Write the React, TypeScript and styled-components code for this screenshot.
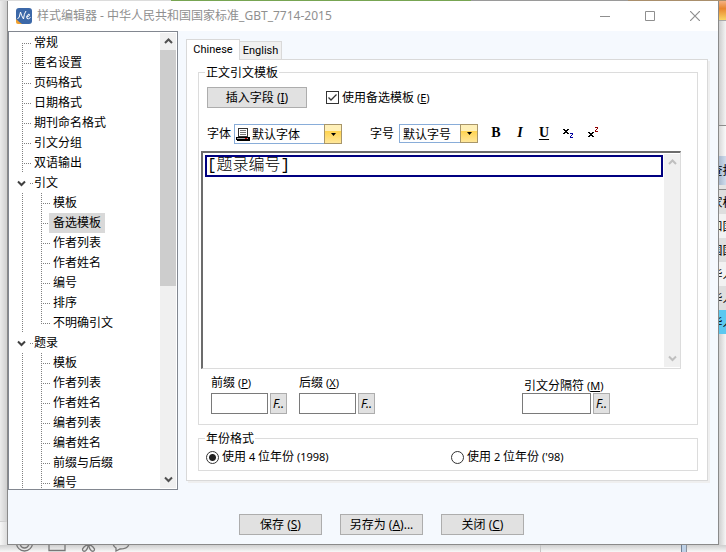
import React from "react";
import styled, { createGlobalStyle, css } from "styled-components";

const UI = `"Noto Sans", "Noto Sans CJK SC", sans-serif`;

const Global = createGlobalStyle`
  *, *::before, *::after { box-sizing: border-box; }
  html, body, #root { height: 100%; margin: 0; }
  body { overflow: hidden; font: 12px/16px ${UI}; color: #000; }
  button, input, textarea, select { font: inherit; color: inherit; margin: 0; }
`;

/* ---------- desktop behind the dialog ---------- */

const Desktop = styled.div`
  display: grid;
  grid-template: 1px minmax(0, 1fr) 7px / 7px minmax(0, 1fr) 7px;
  height: 100%;
  background: #fafafa;
`;
const TopEdge = styled.div`
  grid-column: 1 / -1;
  background: linear-gradient(90deg, #dcdcdc 0 171px, #77a552 171px 471px, #9a9a9a 471px 628px, #a98f6c 628px);
`;
const LeftEdge = styled.div`
  display: flex;
  flex-direction: column;
  justify-content: flex-end;
  background: linear-gradient(90deg, #ebebeb, #cfcfcf);
`;
const LeftFoot = styled.div`
  height: 24px;
  border-top: 1px solid #d0d0d0;
  background: linear-gradient(90deg, #f7f7f7, #dcdcdc);
`;
const RightEdge = styled.div`
  display: flex;
  flex-direction: column;
  overflow: hidden;
  background: #f0f0f0;
`;
const Ribbon = styled.div`
  flex: none;
  height: 20px;
  border-bottom: 1px solid #a8a8a8;
  background: linear-gradient(#f5b183, #e8862e 40%, #fbd565);
`;
const Band = styled.div`
  flex: none;
  height: 105px;
  border-bottom: 1px solid #8c8c8c;
  background: linear-gradient(90deg, #cdcdcd, #f4f4f4);
`;
const PaleBand = styled.div`
  flex: none;
  height: 30px;
  background: linear-gradient(90deg, #d8d8d8, #fafafa);
`;
const FindBand = styled.div`
  display: flex;
  justify-content: center;
  align-items: center;
  flex: none;
  height: 29px;
  white-space: nowrap;
  background: linear-gradient(90deg, #a9b9ce, #cfdcec);
`;
const HeaderLine = styled.div`
  flex: none;
  height: 5px;
  border-bottom: 1px solid #8c8c8c;
  background: #e4e4e4;
`;
const ListRow = styled.div<{ $tone: "odd" | "even" | "active" }>`
  display: flex;
  justify-content: center;
  align-items: center;
  flex: none;
  height: 24px;
  padding-top: 2px;
  white-space: nowrap;
  background: ${(p) => ({ odd: "#dedede", even: "#f2f2f2", active: "#5bc8f0" })[p.$tone]};
`;
const ListRest = styled.div`
  flex: 1;
  background: linear-gradient(90deg, #cfcfcf, #f6f6f6);
`;
const BottomEdge = styled.div`
  grid-column: 1 / -1;
  display: flex;
  justify-content: space-between;
  overflow: hidden;
  background: linear-gradient(#cfcfcf, #f8f8f8);
`;
const ChatIcons = styled.div`
  display: flex;
  gap: 15px;
  padding-left: 16px;
  color: #777;
`;
const PaneEdges = styled.div`
  width: 186px;
  border-left: 1px solid #c4c4c4;
  background: linear-gradient(90deg, transparent 140px, #6f7f95 140px 141px, #bdd0e6 141px 145px, #8a93a0 145px 146px, transparent 146px);
`;

/* ---------- dialog ---------- */

const Dialog = styled.div`
  display: flex;
  flex-direction: column;
  min-height: 0;
  border: solid #8a8a8a;
  border-width: 0 1px 1px;
  background: #f5f9fe;
`;
const TitleBar = styled.header`
  display: flex;
  align-items: center;
  flex: none;
  height: 30px;
  padding: 0 1px 0 8px;
  background: #fff;
  color: #8f8f8f;
`;
const Title = styled.h1`
  flex: 1;
  margin: 0 0 0 5px;
  font-size: 12px;
  font-weight: 400;
`;
const CaptionButton = styled.button`
  display: grid;
  place-items: center;
  width: 45px;
  height: 30px;
  padding: 0;
  border: 0;
  background: none;
`;
const Main = styled.main`
  display: grid;
  grid-template-columns: 170px minmax(0, 1fr);
  gap: 8px;
  flex: 1;
  min-height: 0;
`;
const Actions = styled.footer`
  display: flex;
  justify-content: center;
  flex: none;
  gap: 18px;
  padding: 24px 0 9px 37px;
`;
const Button = styled.button<{ $width: number }>`
  width: ${(p) => p.$width}px;
  height: 21px;
  padding: 0;
  border: 1px solid #adadad;
  background: #e1e1e1;
  line-height: 19px;
  white-space: nowrap;
`;
const Latin = styled.span`
  font-size: 11px;
`;

/* ---------- tree ---------- */

const TreePane = styled.nav`
  display: flex;
  min-height: 0;
  overflow: hidden;
  border: 1px solid #828790;
  padding-right: 1px;
  background: #fff;
`;
const dottedV = "repeating-linear-gradient(#808080 0 1px, transparent 1px 2px)";
const dottedH = "repeating-linear-gradient(90deg, #808080 0 1px, transparent 1px 2px)";

const TreeList = styled.ul`
  flex: 1;
  margin: 0;
  padding: 1px 0 0;
  list-style: none;
`;
const TreeRow = styled.li<{ $level: 0 | 1; $parent?: boolean; $first?: boolean; $last?: boolean; $deep?: boolean }>`
  display: flex;
  align-items: center;
  height: 20px;
  padding-left: ${(p) => (p.$level ? 40 : 21)}px;
  background-repeat: no-repeat;
  ${(p) =>
    p.$level === 0
      ? p.$parent
        ? css`
            background-image: ${dottedH};
            background-size: 3px 1px;
            background-position: 21px 10px;
          `
        : css`
            background-image: ${dottedV}, ${dottedH};
            background-size: 1px ${p.$first ? 10 : 20}px, 9px 1px;
            background-position: 13px ${p.$first ? 10 : 0}px, 13px 10px;
          `
      : css`
          background-image: ${dottedV}, ${dottedV}, ${dottedH};
          background-size: 1px 20px, 1px ${p.$last ? 10 : 20}px, 9px 1px;
          background-position: 13px 0, 32px 0, 32px 10px;
        `}
`;
const Twisty = styled.button`
  display: grid;
  place-items: center;
  width: 11px;
  height: 11px;
  margin-left: -14px;
  margin-right: 3px;
  padding: 0;
  border: 0;
  background: #fff;
  color: #404040;
`;
const NodeLabel = styled.a<{ $selected?: boolean }>`
  padding: 0 4px;
  line-height: 20px;
  color: #000;
  text-decoration: none;
  background: ${(p) => (p.$selected ? "#d9d9d9" : "transparent")};
`;
const ScrollBar = styled.div<{ $dim?: boolean }>`
  display: flex;
  flex-direction: column;
  flex: none;
  width: 16px;
  margin: 1px 0;
  background: #f0f0f0;
  color: ${(p) => (p.$dim ? "#bfbfbf" : "#505050")};
`;
const ScrollArrow = styled.button`
  display: grid;
  place-items: center;
  width: 100%;
  height: 17px;
  padding: 0;
  border: 0;
  background: none;
`;
const ScrollTrack = styled.div`
  flex: 1;
`;
const ScrollThumb = styled.div`
  height: 56%;
  background: #cdcdcd;
`;

/* ---------- tab pane ---------- */

const TabArea = styled.section`
  display: flex;
  flex-direction: column;
  min-height: 0;
  padding: 8px 10px 9px 0;
`;
const TabStrip = styled.div`
  display: flex;
  align-items: flex-end;
  flex: none;
  height: 20px;
`;
const Tab = styled.button<{ $active?: boolean }>`
  flex: none;
  padding: 0;
  font: 11px/16px Roboto, "Noto Sans CJK SC", sans-serif;
  border: 1px solid #d9d9d9;
  border-bottom: 0;
  ${(p) =>
    p.$active
      ? css`
          width: 54px;
          height: 21px;
          background: #fff;
          margin-bottom: -1px;
          z-index: 1;
        `
      : css`
          width: 42px;
          height: 18px;
          border-left: 0;
          background: #f0f0f0;
        `}
`;
const Panel = styled.div`
  display: flex;
  flex-direction: column;
  flex: 1;
  gap: 4px;
  min-height: 0;
  padding: 3px 9px 9px 11px;
  border: 1px solid #d9d9d9;
  background: #fff;
  box-shadow: 2px 2px 0 #efefef;
`;
const Group = styled.fieldset<{ $grow?: boolean }>`
  display: flex;
  flex-direction: column;
  flex: ${(p) => (p.$grow ? "1 1 0" : "none")};
  min-width: 0;
  min-height: 0;
  margin: 0;
  padding: 0;
  border: 1px solid #dcdcdc;
`;
const Legend = styled.legend`
  margin-left: 6px;
  padding: 2px 1px 0;
`;
const InsertRow = styled.div`
  display: flex;
  align-items: center;
  flex: none;
  gap: 19px;
  padding: 6px 8px 0;
`;
const CheckLabel = styled.label`
  display: flex;
  align-items: center;
  gap: 3px;
`;
const CheckBox = styled.input`
  appearance: none;
  width: 13px;
  height: 13px;
  border: 1px solid #333;
  background: #fff;
  &:checked {
    background: #fff
      url("data:image/svg+xml,%3Csvg xmlns='http://www.w3.org/2000/svg' width='11' height='11'%3E%3Cpath d='M1.5 5.5 4 8 9.5 2.5' fill='none' stroke='%23333' stroke-width='1.3'/%3E%3C/svg%3E");
  }
`;
const FormatRow = styled.div`
  display: flex;
  align-items: flex-start;
  flex: none;
  height: 20px;
  margin-top: 16px;
  padding-left: 8px;
`;
const ComboLabel = styled.label`
  width: 27px;
  line-height: 19px;
`;
const Combo = styled.div<{ $width: number; $height: number }>`
  display: flex;
  align-items: center;
  width: ${(p) => p.$width}px;
  height: ${(p) => p.$height}px;
  padding-left: 1px;
  border: 1px solid #89add9;
  background: #fff;
  & + ${ComboLabel} {
    margin-left: 28px;
    width: 29px;
  }
`;
const ComboSelect = styled.select`
  appearance: none;
  flex: 1;
  align-self: stretch;
  min-width: 0;
  padding: 2px 0 0 2px;
  border: 0;
  background: none;
`;
const ComboArrow = styled.span`
  display: grid;
  place-items: center;
  align-self: stretch;
  width: 18px;
  margin: -1px;
  border: 1px solid #a8966a;
  background: linear-gradient(#fff0b8 0 35%, #ffd34f 35%, #ffe79a);
`;
const StyleButtons = styled.div`
  display: flex;
  margin-left: 6px;
`;
const StyleButton = styled.button<{ $kind: "bold" | "italic" | "underline" | "script" }>`
  width: ${(p) => (p.$kind === "script" ? 25 : 24)}px;
  height: 18px;
  padding: 0;
  border: 0;
  background: none;
  font: bold 14px/18px "Liberation Serif", serif;
  font-style: ${(p) => (p.$kind === "italic" ? "italic" : "normal")};
  text-decoration: ${(p) => (p.$kind === "underline" ? "underline" : "none")};
  text-underline-offset: 2px;
  svg { display: block; margin: 0 auto; }
`;
const Editor = styled.div`
  display: flex;
  flex: 1;
  min-height: 0;
  margin: 7px 16px 0 2px;
  border: solid;
  border-width: 2px 1px 1px 2px;
  border-color: #6c6c6c #dcdcdc #dcdcdc #6c6c6c;
`;
const EditorBody = styled.div`
  flex: 1;
  min-width: 0;
  padding: 2px 1px 2px 2px;
`;
const Template = styled.textarea`
  display: block;
  width: 100%;
  height: 22px;
  padding: 0;
  border: 2px solid #000080;
  outline: 0;
  resize: none;
  overflow: hidden;
  font: 16px/18px "Liberation Mono", "Noto Sans CJK SC", monospace;
  font-weight: 300;
`;
const AffixRow = styled.div`
  display: flex;
  align-items: flex-end;
  flex: none;
  gap: 12px;
  padding: 6px 87px 10px 12px;
`;
const Affix = styled.div<{ $end?: boolean }>`
  display: flex;
  flex-direction: column;
  gap: ${(p) => (p.$end ? 0 : 2)}px;
  margin-left: ${(p) => (p.$end ? "auto" : "0")};
`;
const AffixLabel = styled.label<{ $inset?: boolean }>`
  padding-left: ${(p) => (p.$inset ? 2 : 0)}px;
  line-height: ${(p) => (p.$inset ? 14 : 16)}px;
`;
const AffixControls = styled.div`
  display: flex;
  gap: 2px;
`;
const TextBox = styled.input<{ $width: number }>`
  width: ${(p) => p.$width}px;
  height: 21px;
  padding: 0 3px;
  border: 1px solid #7a7a7a;
  background: #fff;
`;
const FieldButton = styled(Button)`
  font-style: italic;
`;
const YearRow = styled.div`
  display: grid;
  grid-template-columns: 245px minmax(0, 1fr);
  padding: 2px 7px 5px;
`;
const RadioLabel = styled.label`
  display: flex;
  align-items: center;
  gap: 3px;
`;
const Radio = styled.input`
  appearance: none;
  width: 13px;
  height: 13px;
  border: 1px solid #333;
  border-radius: 50%;
  background: #fff;
  &:checked { background: radial-gradient(circle, #222 0 3px, #fff 4px); }
`;

/* ---------- drawings ---------- */

const Chevron = ({ up }: { up?: boolean }) => (
  <svg width="9" height="7" viewBox="0 0 9 7" fill="none" stroke="currentColor" strokeWidth="2">
    <path d={up ? "M1 5 4.5 1.5 8 5" : "M1 1.5 4.5 5 8 1.5"} />
  </svg>
);
const AppIcon = () => (
  <svg width="16" height="16" viewBox="0 0 16 16">
    <path d="M0 9v5q0 2 2 2h5z" fill="#f0a030" />
    <path d="M3 0h10q3 0 3 3v10q0 3-3 3H6Q3 14 0 11V3q0-3 3-3z" fill="#3c68a8" />
    <path d="M1.500 11Q3.500 10.500 4.500 4q1 4 3 7 .5-5.500 2.500-8M10.500 9q3-.5 3-2t-1.500-.500q-2 1.500-1 4 1.500 1 3.500-1" fill="none" stroke="#fff" strokeWidth="1" />
  </svg>
);
const FontIcon = () => (
  <svg width="14" height="13" viewBox="0 0 14 13" shapeRendering="crispEdges">
    <path d="M2.500.5h9v8h-9z" fill="#fff" stroke="#333" />
    <path d="M4 2.500h6M4 4.500h6M4 6.500h6" stroke="#777" />
    <path d="M.5 9.500h12v2H.5z" fill="#aaa" stroke="#000" />
    <path d="M1 12.500h13M13.500 9v4" stroke="#000" />
    <path d="M9 10.500h2" stroke="#c00" />
  </svg>
);
const Script = ({ sup }: { sup?: boolean }) => (
  <svg width="12" height="13" viewBox="0 0 12 13" shapeRendering="crispEdges" fill="none">
    <g transform={sup ? "translate(0 5)" : "translate(0 2)"}>
      <path d="M0 .5h2M4 .5h2M1 1.500h4M2 2.500h2M1 3.500h4M0 4.500h2M4 4.500h2" stroke="#000" />
    </g>
    <g transform={sup ? "translate(7 0)" : "translate(7 6)"}>
      <path d="M0 .5h3M2 1.500h1M1 2.500h1M0 3.500h1M0 4.500h3" stroke={sup ? "#900000" : "#0000a0"} />
    </g>
  </svg>
);
const DownMark = () => (
  <svg width="5" height="3" viewBox="0 0 5 3">
    <path d="M0 0h5L2.500 3z" fill="#000" />
  </svg>
);

/* ---------- data ---------- */

type Node = { label: string; children?: string[]; open?: boolean };
const nodes: Node[] = [
  ...["常规", "匿名设置", "页码格式", "日期格式", "期刊命名格式", "引文分组", "双语输出"].map((label) => ({ label })),
  { label: "引文", children: ["模板", "备选模板", "作者列表", "作者姓名", "编号", "排序", "不明确引文"] },
  { label: "题录", children: ["模板", "作者列表", "作者姓名", "编者列表", "编者姓名", "前缀与后缀", "编号"], open: true },
];
const listRows = ["家标", "和国", "国国", "华人", "华人", "华人"];

const Key = ({ k, tail = "" }: { k: string; tail?: string }) => (
  <span>
    {" ("}
    <u>{k}</u>
    {")" + tail}
  </span>
);

function Tree() {
  return (
    <TreePane aria-label="样式">
      <TreeList>
        {nodes.map((node, i) => (
          <React.Fragment key={node.label}>
            <TreeRow $level={0} $parent={!!node.children} $first={i === 0}>
              {node.children && (
                <Twisty aria-label={node.label}>
                  <Chevron />
                </Twisty>
              )}
              <NodeLabel href="#">{node.label}</NodeLabel>
            </TreeRow>
            {node.children?.map((child, j) => (
              <TreeRow key={child} $level={1} $last={!node.open && j === node.children!.length - 1}>
                <NodeLabel href="#" $selected={child === "备选模板"}>
                  {child}
                </NodeLabel>
              </TreeRow>
            ))}
          </React.Fragment>
        ))}
      </TreeList>
      <ScrollBar>
        <ScrollArrow aria-label="向上"><Chevron up /></ScrollArrow>
        <ScrollTrack><ScrollThumb /></ScrollTrack>
        <ScrollArrow aria-label="向下"><Chevron /></ScrollArrow>
      </ScrollBar>
    </TreePane>
  );
}

function AffixField({ id, label, k, width, end }: { id: string; label: string; k: string; width: number; end?: boolean }) {
  return (
    <Affix $end={end}>
      <AffixLabel htmlFor={id} $inset={end}>
        {label}
        <Latin><Key k={k} /></Latin>
      </AffixLabel>
      <AffixControls>
        <TextBox id={id} $width={width} />
        <FieldButton $width={17}>F..</FieldButton>
      </AffixControls>
    </Affix>
  );
}

export default function App() {
  return (
    <>
      <Global />
      <Desktop>
        <TopEdge />
        <LeftEdge>
          <LeftFoot />
        </LeftEdge>
        <Dialog role="dialog" aria-labelledby="title">
          <TitleBar>
            <AppIcon />
            <Title id="title">样式编辑器 - 中华人民共和国国家标准_GBT_7714-2015</Title>
            <CaptionButton aria-label="最小化">
              <svg width="10" height="10"><path d="M0 5.500h10" stroke="#8f8f8f" /></svg>
            </CaptionButton>
            <CaptionButton aria-label="最大化">
              <svg width="10" height="10"><path d="M.5.5h9v9h-9z" fill="none" stroke="#8f8f8f" /></svg>
            </CaptionButton>
            <CaptionButton aria-label="关闭窗口">
              <svg width="10" height="10"><path d="M0 0 10 10M10 0 0 10" stroke="#8f8f8f" strokeWidth="1.200" /></svg>
            </CaptionButton>
          </TitleBar>
          <Main>
            <Tree />
            <TabArea>
              <TabStrip role="tablist">
                <Tab role="tab" aria-selected $active>Chinese</Tab>
                <Tab role="tab">English</Tab>
              </TabStrip>
              <Panel>
                <Group $grow>
                  <Legend>正文引文模板</Legend>
                  <InsertRow>
                    <Button $width={100}>插入字段<Key k="I" /></Button>
                    <CheckLabel>
                      <CheckBox type="checkbox" defaultChecked />
                      <span>使用备选模板<Latin><Key k="E" /></Latin></span>
                    </CheckLabel>
                  </InsertRow>
                  <FormatRow>
                    <ComboLabel htmlFor="font">字体</ComboLabel>
                    <Combo $width={108} $height={20}>
                      <FontIcon />
                      <ComboSelect id="font"><option>默认字体</option></ComboSelect>
                      <ComboArrow><DownMark /></ComboArrow>
                    </Combo>
                    <ComboLabel htmlFor="size">字号</ComboLabel>
                    <Combo $width={79} $height={19}>
                      <ComboSelect id="size"><option>默认字号</option></ComboSelect>
                      <ComboArrow><DownMark /></ComboArrow>
                    </Combo>
                    <StyleButtons>
                      <StyleButton $kind="bold">B</StyleButton>
                      <StyleButton $kind="italic">I</StyleButton>
                      <StyleButton $kind="underline">U</StyleButton>
                      <StyleButton $kind="script" aria-label="下标"><Script /></StyleButton>
                      <StyleButton $kind="script" aria-label="上标"><Script sup /></StyleButton>
                    </StyleButtons>
                  </FormatRow>
                  <Editor>
                    <EditorBody>
                      <Template aria-label="正文引文模板" spellCheck={false} defaultValue="[题录编号]" />
                    </EditorBody>
                    <ScrollBar $dim>
                      <ScrollArrow aria-label="向上"><Chevron up /></ScrollArrow>
                      <ScrollTrack />
                      <ScrollArrow aria-label="向下"><Chevron /></ScrollArrow>
                    </ScrollBar>
                  </Editor>
                  <AffixRow>
                    <AffixField id="prefix" label="前缀" k="P" width={57} />
                    <AffixField id="suffix" label="后缀" k="X" width={57} />
                    <AffixField id="separator" label="引文分隔符" k="M" width={69} end />
                  </AffixRow>
                </Group>
                <Group>
                  <Legend>年份格式</Legend>
                  <YearRow>
                    <RadioLabel>
                      <Radio type="radio" name="year" defaultChecked />
                      <span>使用<Latin> 4 </Latin>位年份<Latin> (1998)</Latin></span>
                    </RadioLabel>
                    <RadioLabel>
                      <Radio type="radio" name="year" />
                      <span>使用<Latin> 2 </Latin>位年份<Latin> ('98)</Latin></span>
                    </RadioLabel>
                  </YearRow>
                </Group>
              </Panel>
            </TabArea>
          </Main>
          <Actions>
            <Button $width={83}>保存<Key k="S" /></Button>
            <Button $width={83}>另存为<Key k="A" tail="..." /></Button>
            <Button $width={83}>关闭<Key k="C" /></Button>
          </Actions>
        </Dialog>
        <RightEdge>
          <Ribbon />
          <Band />
          <PaleBand />
          <FindBand>查找</FindBand>
          <HeaderLine />
          {listRows.map((text, i) => (
            <ListRow key={i} $tone={i === 5 ? "active" : i % 2 ? "even" : "odd"}>{text}</ListRow>
          ))}
          <ListRest />
        </RightEdge>
        <BottomEdge>
          <ChatIcons>
            <svg width="17" height="7" fill="none" stroke="currentColor" strokeWidth="1.300">
              <circle cx="8.500" cy="-2" r="8" />
              <path d="M4-1q1 4 4.500 4T13-1z" />
            </svg>
            <svg width="18" height="7" fill="none" stroke="currentColor" strokeWidth="1.300">
              <path d="M1-6V5.500h16V-6z" />
            </svg>
            <svg width="16" height="7" fill="none" stroke="currentColor" strokeWidth="1.300">
              <path d="M7.500-1Q3 1 1.500 4q0 3 3 2Q7 4 7.500-1Q8 4 10.500 6q3 1 3-2Q12 1 7.500-1" />
            </svg>
            <svg width="18" height="7" fill="none" stroke="currentColor" strokeWidth="1.300">
              <path d="M1-1Q2 2 4 3v3l4-2q8 0 9-5" />
            </svg>
          </ChatIcons>
          <PaneEdges />
        </BottomEdge>
      </Desktop>
    </>
  );
}
